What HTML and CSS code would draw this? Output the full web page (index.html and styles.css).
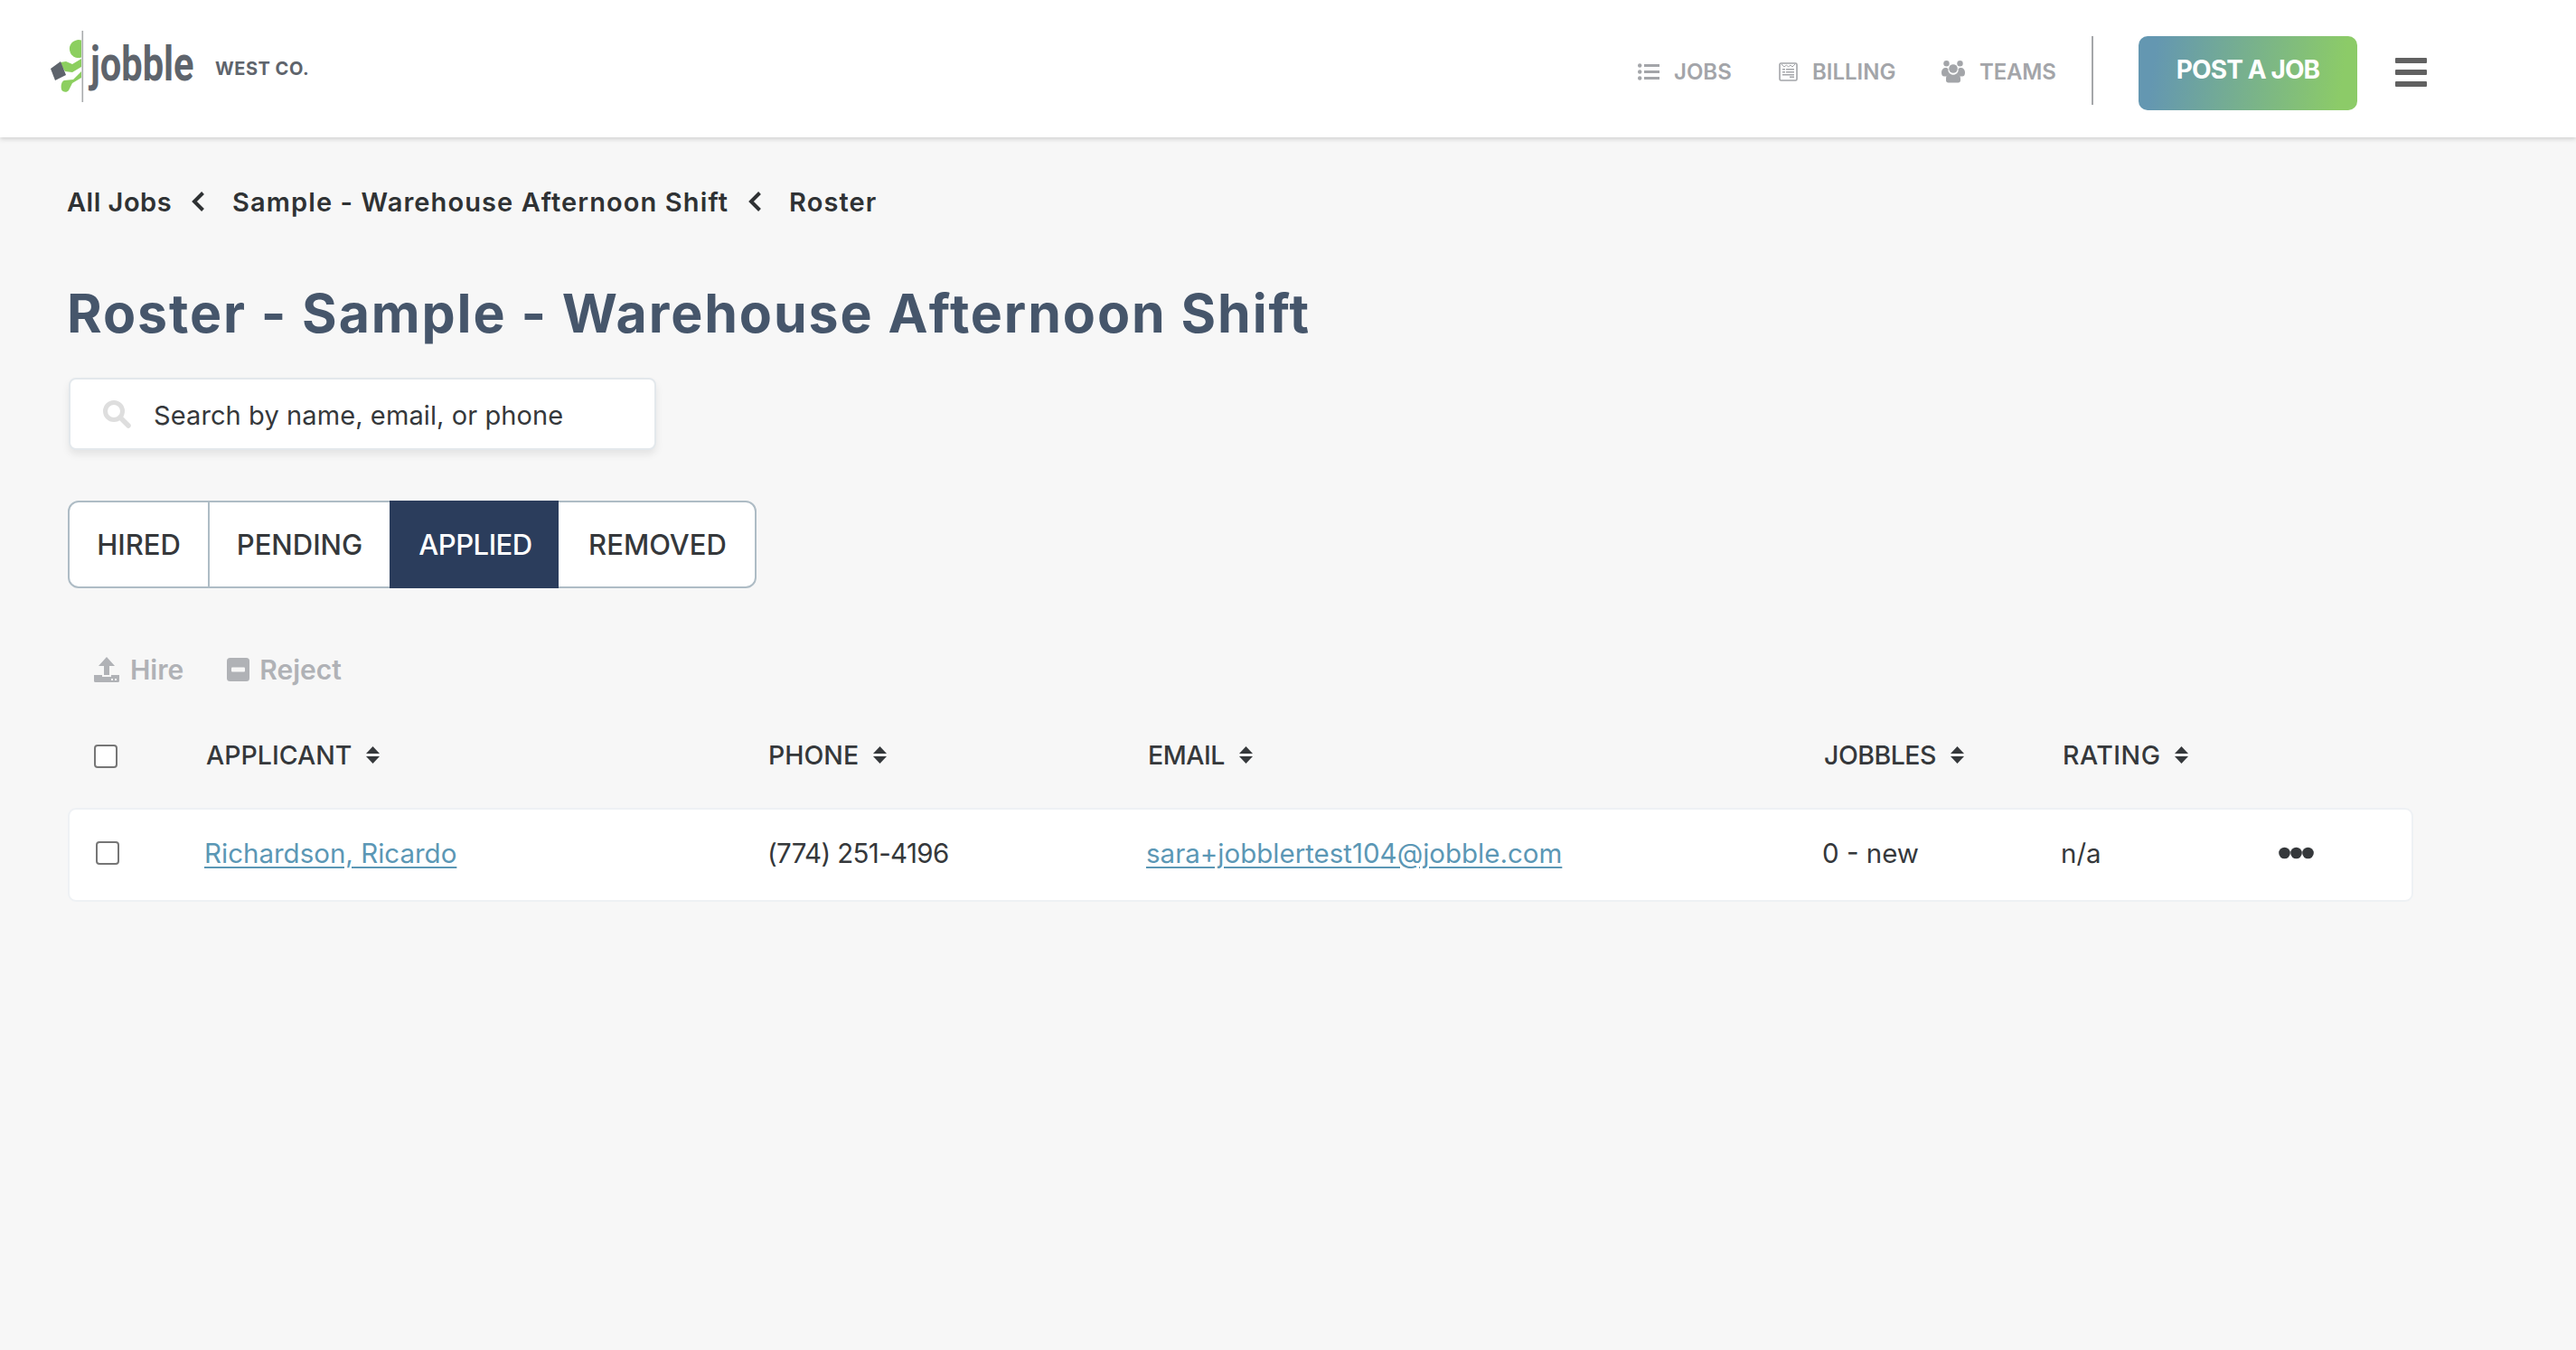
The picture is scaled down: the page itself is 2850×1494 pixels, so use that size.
FILE: index.html
```html
<!DOCTYPE html>
<html lang="en">
<head>
<meta charset="utf-8">
<title>Roster</title>
<link rel="stylesheet" href="styles.css">
</head>
<body>
<header class="topbar">
  <a class="brand" href="#">
    <svg class="brand-mark" width="162" height="84" viewBox="56 32 162 84" aria-hidden="true">
      <rect x="90.5" y="34" width="1.6" height="79" fill="#a9abad"/>
      <path d="M90 45.600a10 10 0 1 0 0 19z" fill="#8ccf5f" transform="translate(0 -1)"/>
      <path d="M67 69l6-1 7 3 10-6v9l-10 6-8-1-3-5z" fill="#8ccf5f"/>
      <path d="M90 79v7l-10 6-4 8c-2 3-7 2-8-1-1-4 0-9 3-10l10-1 9-9z" fill="#8ccf5f"/>
      <path d="M56 76l11-8 6 15-12 6z" fill="#5e646c"/>
      <text class="brand-word" transform="translate(100 89) scale(.77 1)">jobble</text>
    </svg>
    <span class="brand-co">WEST CO.</span>
  </a>
  <div class="topbar-right">
    <nav class="nav">
      <a class="nav-item nav-jobs" href="#">
        <svg width="24" height="19" viewBox="0 0 24 19" aria-hidden="true"><g fill="#a3a5a9"><circle cx="2.200" cy="2.500" r="2.200"/><circle cx="2.200" cy="9.500" r="2.200"/><circle cx="2.200" cy="16.500" r="2.200"/><rect x="7" y="1" width="17" height="3"/><rect x="7" y="8" width="17" height="3"/><rect x="7" y="15" width="17" height="3"/></g></svg>
        <span>JOBS</span>
      </a>
      <a class="nav-item nav-billing" href="#">
        <svg width="21" height="21" viewBox="0 0 21 21" aria-hidden="true"><rect x="1" y="1" width="19" height="19" rx="1.500" fill="none" stroke="#a3a5a9" stroke-width="1.600"/><path d="M3 2l3 3 2.500-2 2 2 2.500-2 2 2 3-3" fill="none" stroke="#a3a5a9" stroke-width="1"/><g fill="#a3a5a9"><rect x="4" y="7" width="3" height="1.500"/><rect x="8" y="7" width="9" height="1.500"/><rect x="4" y="10" width="3" height="1.500"/><rect x="8" y="10" width="9" height="1.500"/><rect x="4" y="13" width="13" height="1.500"/><rect x="12" y="15.500" width="5" height="1.500"/></g></svg>
        <span>BILLING</span>
      </a>
      <a class="nav-item nav-teams" href="#">
        <svg width="26" height="25" viewBox="0 0 26 25" aria-hidden="true"><g fill="#a3a5a9"><circle cx="5.500" cy="3.300" r="3.200"/><circle cx="20.500" cy="3.300" r="3.200"/><circle cx="13" cy="9" r="4.800"/><path d="M0 13c0-3 2-5 4.500-5 1.500 0 2.500.5 3 1.500-.5 2 .5 4 2 5-2 .5-3 1.500-3.500 3H3c-2 0-3-1.500-3-4.500z"/><path d="M26 13c0-3-2-5-4.500-5-1.500 0-2.500.5-3 1.500.5 2-.5 4-2 5 2 .5 3 1.500 3.500 3h3c2 0 3-1.500 3-4.500z"/><path d="M5 20c0-3.500 2.500-5.500 4.500-5.500 1 .8 2.200 1.200 3.500 1.200s2.500-.4 3.500-1.200c2 0 4.500 2 4.500 5.500v2c0 1.500-1 2.500-2.500 2.500h-11C6 24.500 5 23.500 5 22z"/></g></svg>
        <span>TEAMS</span>
      </a>
    </nav>
    <span class="divider"></span>
    <a class="post-job" href="#">POST A JOB</a>
    <button class="burger" type="button" aria-label="Menu"><span></span><span></span><span></span></button>
  </div>
</header>

<main class="page">
  <nav class="crumbs">
    <a class="crumb-first" href="#">All Jobs</a>
    <svg class="crumb-sep" width="17" height="24" viewBox="0 0 17 24" aria-hidden="true"><path d="M13.500 2.500L4 12l9.500 9.500" fill="none" stroke="#2f3234" stroke-width="4"/></svg>
    <a href="#">Sample - Warehouse Afternoon Shift</a>
    <svg class="crumb-sep" width="17" height="24" viewBox="0 0 17 24" aria-hidden="true"><path d="M13.500 2.500L4 12l9.500 9.500" fill="none" stroke="#2f3234" stroke-width="4"/></svg>
    <span>Roster</span>
  </nav>

  <h1 class="title">Roster - Sample - Warehouse Afternoon Shift</h1>

  <label class="search">
    <svg width="32" height="32" viewBox="0 0 32 32" aria-hidden="true"><circle cx="13" cy="13" r="9.500" fill="none" stroke="#dedede" stroke-width="5"/><path d="M20 20l9 9" stroke="#dedede" stroke-width="5.500" stroke-linecap="round"/></svg>
    <input class="search-input" type="text" placeholder="Search by name, email, or phone">
  </label>

  <div class="tabs">
    <a class="tab" href="#">HIRED</a>
    <a class="tab" href="#">PENDING</a>
    <a class="tab tab-active" href="#">APPLIED</a>
    <a class="tab tab-last" href="#">REMOVED</a>
  </div>

  <div class="actions">
    <span class="action action-hire">
      <svg width="28" height="28" viewBox="0 0 28 28" aria-hidden="true"><path d="M14 0l9 10h-6v10h-6V10H5z" fill="#b0b2b6"/><path d="M0 20h9v2h10v-2h9v6.500a1.500 1.500 0 0 1-1.500 1.500h-25A1.500 1.500 0 0 1 0 26.500z" fill="#b0b2b6"/><rect x="19" y="24" width="2" height="2" fill="#f7f7f7"/><rect x="23" y="24" width="2" height="2" fill="#f7f7f7"/></svg>
      <span>Hire</span>
    </span>
    <span class="action action-reject">
      <svg width="25" height="26" viewBox="0 0 25 26" aria-hidden="true"><rect width="25" height="26" rx="3.500" fill="#b0b2b6"/><rect x="5" y="10.500" width="15" height="5" rx="1" fill="#f7f7f7"/></svg>
      <span>Reject</span>
    </span>
  </div>

  <div class="cols cols-head">
    <input class="check" type="checkbox" aria-label="Select all">
    <span class="th">APPLICANT <svg class="sort" width="15" height="19" viewBox="0 0 15 19" aria-hidden="true"><path d="M7.500 0l7.500 8H0zM7.500 19L0 11h15z" fill="#35383b"/></svg></span>
    <span class="th">PHONE <svg class="sort" width="15" height="19" viewBox="0 0 15 19" aria-hidden="true"><path d="M7.500 0l7.500 8H0zM7.500 19L0 11h15z" fill="#35383b"/></svg></span>
    <span class="th th-tight">EMAIL <svg class="sort" width="15" height="19" viewBox="0 0 15 19" aria-hidden="true"><path d="M7.500 0l7.500 8H0zM7.500 19L0 11h15z" fill="#35383b"/></svg></span>
    <span class="th th-tight">JOBBLES <svg class="sort" width="15" height="19" viewBox="0 0 15 19" aria-hidden="true"><path d="M7.500 0l7.500 8H0zM7.500 19L0 11h15z" fill="#35383b"/></svg></span>
    <span class="th th-wide">RATING <svg class="sort" width="15" height="19" viewBox="0 0 15 19" aria-hidden="true"><path d="M7.500 0l7.500 8H0zM7.500 19L0 11h15z" fill="#35383b"/></svg></span>
  </div>

  <div class="cols card">
    <input class="check" type="checkbox" aria-label="Select Richardson, Ricardo">
    <a class="link" href="#">Richardson, Ricardo</a>
    <span class="td td-phone">(774) 251-4196</span>
    <a class="link" href="#">sara+jobblertest104@jobble.com</a>
    <span class="td">0 - new</span>
    <span class="td">n/a</span>
    <svg class="dots" width="39" height="14" viewBox="0 0 39 14" aria-hidden="true"><g fill="#35383b"><circle cx="6.500" cy="7" r="6.300"/><circle cx="19.500" cy="7" r="6.300"/><circle cx="32.500" cy="7" r="6.300"/></g></svg>
  </div>
</main>
</body>
</html>
```
FILE: styles.css
```css
* { box-sizing: border-box; }

html, body { margin: 0; height: 100%; }

body {
  background: #f7f7f7;
  color: #35383b;
  font-family: Inter, "Noto Sans", sans-serif;
}

a { color: inherit; text-decoration: none; }

/* top bar */
.topbar {
  display: flex;
  align-items: flex-start;
  justify-content: space-between;
  height: 152px;
  padding: 0 165px 0 56px;
  background: #fff;
  box-shadow: 0 2px 5px rgba(0, 0, 0, .16);
}

.brand { display: flex; align-items: flex-start; }
.brand-mark { display: block; margin-top: 32px; }
.brand-word {
  font-family: Roboto, sans-serif;
  font-size: 54px;
  font-weight: 700;
  fill: #5e646c;
}
.brand-co {
  margin: 64px 0 0 20px;
  color: #5e646c;
  font-size: 20px;
  line-height: 24px;
  font-weight: 700;
  letter-spacing: .5px;
}

.topbar-right { display: flex; align-items: flex-start; }

.nav { display: flex; margin-top: 64px; }
.nav-item {
  display: flex;
  align-items: center;
  height: 30px;
  color: #a3a5a9;
  font-size: 24px;
  font-weight: 600;
}
.nav-jobs { gap: 16px; width: 156px; }
.nav-billing { gap: 16px; width: 180px; }
.nav-teams { gap: 16px; width: 166px; letter-spacing: -.2px; }

.divider {
  width: 2px;
  height: 76px;
  margin-top: 40px;
  background: #a5a7aa;
}

.post-job {
  display: block;
  width: 242px;
  height: 82px;
  margin: 40px 42px 0 50px;
  padding-top: 21px;
  border-radius: 10px;
  background: linear-gradient(97deg, #6497b1 8%, #8ccb68 92%);
  color: #fff;
  font-size: 28px;
  line-height: 32px;
  font-weight: 700;
  letter-spacing: -.9px;
  text-align: center;
}

.burger {
  display: flex;
  flex-direction: column;
  gap: 7px;
  width: 35px;
  margin-top: 64px;
  padding: 0;
  border: 0;
  background: none;
}
.burger span {
  display: block;
  width: 35px;
  height: 6px;
  border-radius: 1px;
  background: #616161;
}

/* page */
.page { padding: 51px 0 0 74px; }

.crumbs {
  display: flex;
  align-items: center;
  height: 40px;
  color: #2f3234;
  font-size: 29px;
  font-weight: 600;
  letter-spacing: 1.1px;
}
.crumb-first { letter-spacing: .5px; }
.crumb-sep { margin: 0 29px 0 21px; }

.title {
  margin: 64px 0 0;
  color: #46566b;
  font-size: 59px;
  line-height: 80px;
  font-weight: 700;
  letter-spacing: 1.9px;
}

.search {
  display: flex;
  align-items: center;
  gap: 25px;
  width: 650px;
  height: 80px;
  margin: 31px 0 0 2px;
  padding-left: 35px;
  border: 2px solid #e3e8ec;
  border-radius: 8px;
  background: #fff;
  box-shadow: 0 5px 9px rgba(0, 0, 0, .08);
}
.search-input {
  flex: 1;
  min-width: 0;
  padding: 2px 0 0;
  border: 0;
  outline: 0;
  background: none;
  color: #35383b;
  font: 400 29px Inter, "Noto Sans", sans-serif;
  letter-spacing: .1px;
}
.search-input::placeholder { color: #35383b; opacity: 1; }

.tabs {
  display: grid;
  grid-template-columns: 153px 201px 187px 217px;
  width: 762px;
  height: 97px;
  margin-top: 56px;
  margin-left: 1px;
  border: 2px solid #aebcc5;
  border-radius: 12px;
  background: #fff;
}
.tab {
  display: flex;
  align-items: center;
  justify-content: center;
  border-left: 2px solid #aebcc5;
  color: #35383b;
  font-size: 31px;
  font-weight: 500;
}
.tab:first-child { border-left: 0; }
.tab-active {
  margin: -2px 0;
  border-left: 0;
  background: #2b3d5c;
  color: #fff;
  letter-spacing: -.5px;
  padding-left: 3px;
}
.tab-active + .tab { border-left: 0; }
.tab-last { padding-left: 2px; }

.actions {
  display: flex;
  height: 40px;
  margin-top: 70px;
  padding-left: 30px;
  color: #b0b2b6;
  font-size: 30px;
  font-weight: 600;
}
.action { display: flex; align-items: center; gap: 12px; }
.action-reject { margin-left: 48px; gap: 11px; }

/* table */
.cols {
  display: grid;
  grid-template-columns: 153px 622px 420px 748px 264px 239px 1fr;
  align-items: center;
  width: 2595px;
  margin-left: 1px;
}

.cols-head {
  height: 40px;
  margin-top: 54px;
}
.cols-head .check { margin-top: 4px; }
.th {
  display: flex;
  align-items: center;
  gap: 16px;
  color: #35383b;
  font-size: 28.5px;
  font-weight: 500;
}
.th-tight { letter-spacing: -.5px; }
.th-wide { letter-spacing: .5px; }

.check {
  appearance: none;
  display: block;
  width: 26px;
  height: 26px;
  margin: 0 0 0 29px;
  border: 2px solid #767676;
  border-radius: 4px;
  background: #fff;
}

.card {
  grid-template-columns: 149px 623px 419px 748px 264px 241px 1fr;
  height: 104px;
  margin-top: 39px;
  padding-bottom: 4px;
  border: 2px solid #eef1f4;
  border-radius: 9px;
  background: #fff;
  font-size: 29.5px;
}
.td { color: #35383b; }
.td-phone { letter-spacing: -.65px; }
.link {
  color: #5b97b5;
  text-decoration: underline;
  text-underline-offset: 4px;
}
.dots { display: block; }
```
